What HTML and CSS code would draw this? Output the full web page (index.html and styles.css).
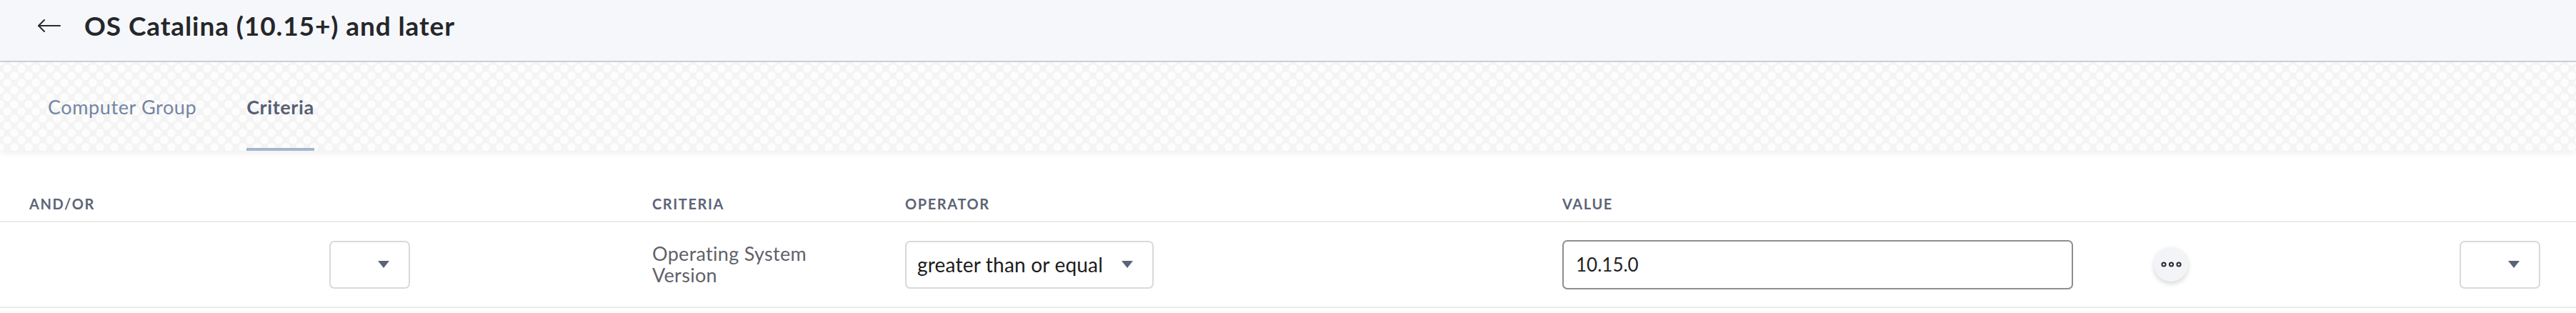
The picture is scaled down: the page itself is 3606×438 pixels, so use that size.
FILE: index.html
```html
<!DOCTYPE html>
<html lang="en">
<head>
<meta charset="utf-8">
<title>OS Catalina (10.15+) and later</title>
<link rel="stylesheet" href="styles.css">
</head>
<body>
<header class="page-header">
  <button class="back" aria-label="Back">
    <svg width="34" height="20" viewBox="0 0 34 20" fill="none" stroke="#2b2b2b" stroke-width="2" stroke-linecap="round" stroke-linejoin="round">
      <path d="M2 10 H32"/>
      <path d="M10 2 L2 10 L10 18"/>
    </svg>
  </button>
  <h1 class="title">OS Catalina (10.15+) and later</h1>
</header>
<nav class="tabs">
  <a class="tab">Computer Group</a>
  <a class="tab active">Criteria</a>
</nav>
<section class="criteria">
  <div class="row head">
    <div class="cell">AND/OR</div>
    <div class="cell"></div>
    <div class="cell">CRITERIA</div>
    <div class="cell">OPERATOR</div>
    <div class="cell">VALUE</div>
    <div class="cell"></div>
    <div class="cell"></div>
  </div>
  <div class="row body">
    <div class="cell"></div>
    <div class="cell"><div class="select small"><span class="caret"></span></div></div>
    <div class="cell crit-name">Operating System<br>Version</div>
    <div class="cell"><div class="select wide"><span class="sel-text">greater than or equal</span><span class="caret"></span></div></div>
    <div class="cell"><div class="input">10.15.0</div></div>
    <div class="cell">
      <button class="more" aria-label="More">
        <svg width="48" height="48" viewBox="0 0 48 48" fill="none" stroke="#2a2a2a" stroke-width="2">
          <circle cx="14" cy="24" r="2.6"/>
          <circle cx="24.5" cy="24" r="2.6"/>
          <circle cx="35" cy="24" r="2.6"/>
        </svg>
      </button>
    </div>
    <div class="cell"><div class="select small"><span class="caret"></span></div></div>
  </div>
</section>
</body>
</html>
```

FILE: styles.css
```css
* { box-sizing: border-box; }

html, body {
  margin: 0;
  padding: 0;
  background: #ffffff;
  font-family: Lato, "Open Sans", "Liberation Sans", sans-serif;
}

.page-header {
  height: 87px;
  background: #f6f7fa;
  border-bottom: 2px solid #cfd0d5;
  display: flex;
  align-items: center;
  padding: 0 0 14px 52px;
}

.back {
  border: 0;
  background: transparent;
  padding: 0;
  width: 34px;
  height: 20px;
  margin-right: 32px;
  display: flex;
}

.title {
  margin: 0;
  font-size: 37px;
  font-weight: 700;
  color: #25272b;
  letter-spacing: 0.9px;
}

.tabs {
  height: 124px;
  display: flex;
  align-items: stretch;
  gap: 70px;
  padding: 0 0 0 67px;
  background-color: #f4f4f4;
  background-image:
    radial-gradient(circle at 50% 45%, #fdfdfd 0 34%, rgba(253,253,253,0) 42%),
    radial-gradient(circle at 50% 45%, #fdfdfd 0 34%, rgba(253,253,253,0) 42%);
  background-size: 20px 20px, 20px 20px;
  background-position: 0 0, 10px 10px;
  box-shadow: 0 4px 9px rgba(0, 0, 0, 0.06);
  position: relative;
  z-index: 1;
}

.tab {
  display: flex;
  align-items: center;
  padding-top: 4px;
  border-bottom: 4px solid transparent;
  font-size: 27px;
  letter-spacing: 0.6px;
  color: #7485a3;
  font-weight: 400;
}

.tab.active {
  color: #566074;
  font-weight: 700;
  border-bottom-color: #a6b5cf;
}

.criteria { background: #fff; }

.row {
  display: grid;
  grid-template-columns: 420px 452px 354px 920px 828px 428px 113px;
  padding: 0 50px 0 41px;
  border-bottom: 2px solid #ebebeb;
}

.row.head {
  height: 100px;
  align-items: end;
  padding-bottom: 12px;
}

.row.head .cell {
  font-size: 20px;
  line-height: 24px;
  font-weight: 700;
  letter-spacing: 1.6px;
  color: #5d6477;
}

.row.body {
  height: 120px;
  align-items: center;
}

.crit-name {
  font-size: 27px;
  line-height: 30px;
  letter-spacing: 0.3px;
  color: #5f6269;
}

.select {
  height: 67px;
  border: 2px solid #d9d9d9;
  border-radius: 7px;
  display: flex;
  align-items: center;
  justify-content: space-between;
  padding: 0 27px 0 15px;
  background: #fff;
}

.select.small { width: 113px; justify-content: flex-end; }
.select.wide { width: 348px; }

.sel-text {
  font-size: 28px;
  letter-spacing: 0.2px;
  color: #1c1c1c;
}

.caret {
  width: 0;
  height: 0;
  border-left: 8px solid transparent;
  border-right: 8px solid transparent;
  border-top: 10px solid #5b6378;
}

.input {
  width: 715px;
  height: 69px;
  border: 2px solid #8e8e8e;
  border-radius: 7px;
  display: flex;
  align-items: center;
  padding-left: 17px;
  font-size: 26px;
  color: #222;
}

.more {
  width: 48px;
  height: 48px;
  border: 0;
  padding: 0;
  border-radius: 50%;
  background: #f3f4f7;
  box-shadow: 0 3px 7px rgba(0, 0, 0, 0.16);
  display: flex;
}
```
